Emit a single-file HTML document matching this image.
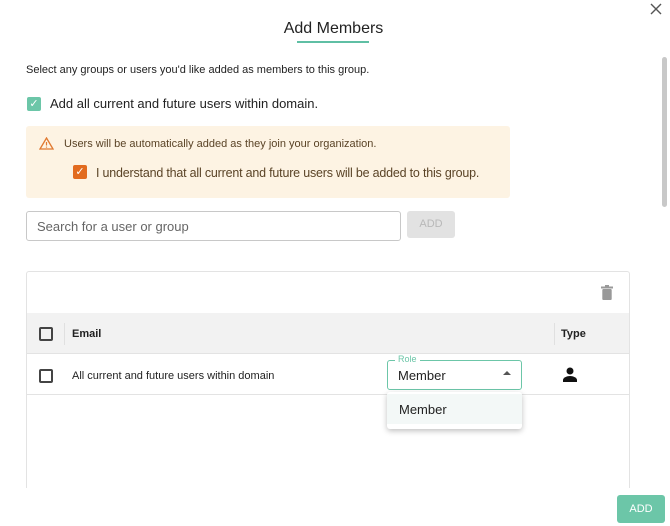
<!DOCTYPE html>
<html><head><style>
*{box-sizing:border-box;margin:0;padding:0}
body{width:670px;height:526px;overflow:hidden;background:#fff;font-family:"Liberation Sans",sans-serif;color:#222;position:relative}
.a{position:absolute}
.cb{position:absolute;width:14px;height:14px;border:2px solid #444;border-radius:2px}
</style></head><body>
<svg class="a" style="left:650px;top:3px" width="12" height="12" viewBox="0 0 12 12"><path d="M1 1L11 11M11 1L1 11" stroke="#555" stroke-width="1.4"/></svg>
<div class="a" style="left:0;width:667px;top:20px;text-align:center;font-size:16px;color:#222">Add Members</div>
<div class="a" style="left:297px;top:41px;width:72px;height:2px;background:#5fbfa4"></div>
<div class="a" style="left:662px;top:57px;width:5px;height:150px;background:#c8c8c8;border-radius:3px"></div>
<div class="a" style="left:26px;top:64px;font-size:11px">Select any groups or users you'd like added as members to this group.</div>
<div class="a" style="left:27px;top:97px;width:14px;height:14px;background:#6cc6a8;border-radius:2px;color:#fff;font-size:11px;line-height:14px;text-align:center">✓</div>
<div class="a" style="left:50px;top:96px;font-size:13px">Add all current and future users within domain.</div>
<div class="a" style="left:26px;top:126px;width:484px;height:72px;background:#fdf3e3;border-radius:3px"></div>
<svg class="a" style="left:39px;top:137px" width="15" height="13" viewBox="0 0 15 13"><path d="M7.5 1L14 12H1Z" fill="none" stroke="#e0782f" stroke-width="1.3"/><path d="M7.5 5v3.5M7.5 9.6v1" stroke="#e0782f" stroke-width="1.2"/></svg>
<div class="a" style="left:64px;top:138px;font-size:11px;color:#5a4326">Users will be automatically added as they join your organization.</div>
<div class="a" style="left:73px;top:165px;width:14px;height:14px;background:#e26b1f;border-radius:2px;color:#fff;font-size:11px;line-height:14px;text-align:center">✓</div>
<div class="a" style="left:96px;top:165px;font-size:13px;color:#5a4326;letter-spacing:-0.2px;transform:scaleX(0.96);transform-origin:left">I understand that all current and future users will be added to this group.</div>
<div class="a" style="left:26px;top:211px;width:375px;height:30px;border:1px solid #c8c8c8;border-radius:3px;font-size:13px;color:#666;padding:7px 10px">Search for a user or group</div>
<div class="a" style="left:407px;top:211px;width:48px;height:27px;background:#e2e2e2;border-radius:3px;font-size:11px;color:#b8b8b8;text-align:center;line-height:27px">ADD</div>
<div class="a" style="left:26px;top:271px;width:604px;height:230px;border:1px solid #e3e3e3;border-radius:3px"></div>
<svg class="a" style="left:601px;top:285px" width="12" height="15" viewBox="0 0 12 15"><rect x="0" y="1.5" width="12" height="2" fill="#999"/><rect x="4" y="0" width="4" height="2" fill="#999"/><rect x="1.3" y="4" width="9.4" height="11" rx="1" fill="#999"/></svg>
<div class="a" style="left:27px;top:313px;width:602px;height:41px;background:#f2f2f2;border-bottom:1px solid #e3e3e3"></div>
<div class="cb" style="left:39px;top:327px"></div>
<div class="a" style="left:64px;top:323px;width:1px;height:22px;background:#e0e0e0"></div>
<div class="a" style="left:554px;top:323px;width:1px;height:22px;background:#e0e0e0"></div>
<div class="a" style="left:72px;top:328px;font-size:11px;font-weight:bold">Email</div>
<div class="a" style="left:561px;top:328px;font-size:11px;font-weight:bold">Type</div>
<div class="a" style="left:27px;top:394px;width:602px;height:1px;background:#e3e3e3"></div>
<div class="cb" style="left:39px;top:369px"></div>
<div class="a" style="left:72px;top:370px;font-size:11px">All current and future users within domain</div>
<div class="a" style="left:387px;top:360px;width:135px;height:30px;border:1.5px solid #6cc6a8;border-radius:3px"></div>
<div class="a" style="left:395px;top:354px;padding:0 3px;background:#fff;font-size:9px;color:#6cc6a8">Role</div>
<div class="a" style="left:398px;top:368px;font-size:13px">Member</div>
<div class="a" style="left:503px;top:371px;width:0;height:0;border-left:4px solid transparent;border-right:4px solid transparent;border-bottom:4px solid #555"></div>
<div class="a" style="left:387px;top:392px;width:135px;height:37px;background:#fff;box-shadow:0 2px 6px rgba(0,0,0,.25);border-radius:3px"></div>
<div class="a" style="left:387px;top:394px;width:135px;height:30px;background:#f3f8f7"></div>
<div class="a" style="left:399px;top:402px;font-size:13px">Member</div>
<svg class="a" style="left:563px;top:367px" width="14" height="15" viewBox="0 0 14 15"><circle cx="7" cy="4" r="3.5" fill="#111"/><path d="M0 15v-2c0-2.5 4-4 7-4s7 1.5 7 4v2z" fill="#111"/></svg>
<div class="a" style="left:0;top:488px;width:660px;height:38px;background:#fff"></div>
<div class="a" style="left:617px;top:495px;width:48px;height:28px;background:#6cc6a8;border-radius:3px;color:#fff;font-size:11px;text-align:center;line-height:28px">ADD</div>
</body></html>
